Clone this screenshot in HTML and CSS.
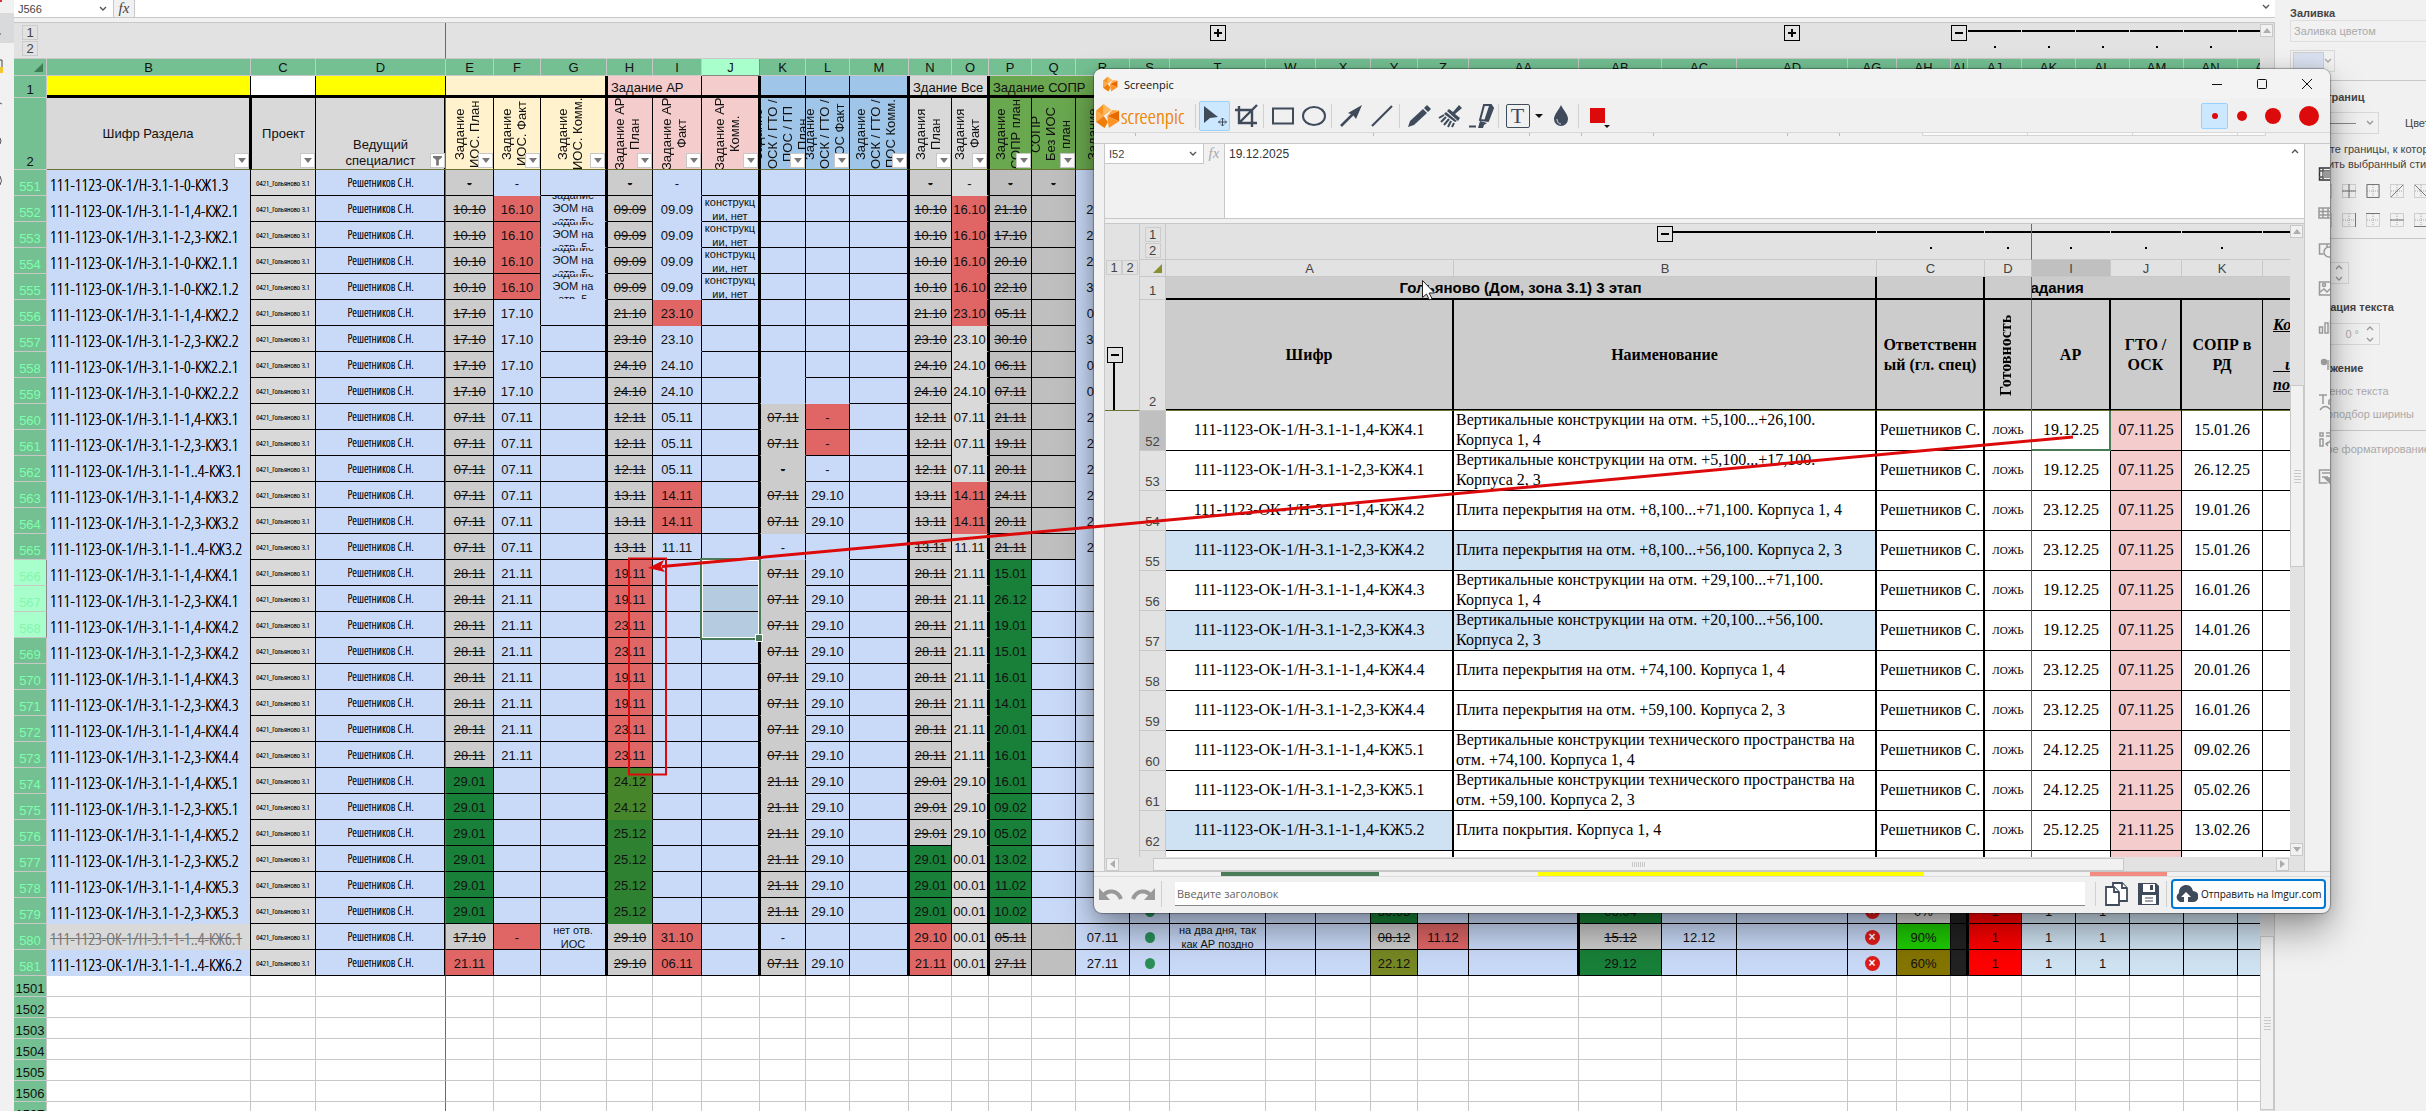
FILE: index.html
```html
<!DOCTYPE html>
<html lang="ru">
<head>
<meta charset="utf-8">
<title>Таблица — Screenpic</title>
<link rel="stylesheet" href="styles.css">
</head>
<body>
<div class="app">
  <aside class="rail">
    <svg width="14" height="240" viewBox="0 0 14 240" aria-hidden="true">
      <path d="M0 0h2v2h-2z" fill="#e03030"/><path d="M0 13h14v30h-14z" fill="#d8dadc"/><path d="M0 34h1" stroke="#555"/>
      <path d="M0 60h2v8" stroke="#444" fill="none"/><rect x="0" y="67" width="3" height="6" fill="#f2c72e"/>
      <path d="M0 103l2 1M0 138q2 3 0 6M0 176q3 5 0 9" stroke="#555" fill="none"/>
    </svg>
  </aside>
  <main class="book">
    <div class="formula">
      <label class="name-box"><input class="name-input" value="J566" aria-label="Имя ячейки"><svg width="8" height="6" viewBox="0 0 8 6"><path d="M1 1l3 3 3-3" fill="none" stroke="#555" stroke-width="1.4"/></svg></label>
      <button class="fx" aria-label="Вставить функцию">fx</button>
      <input class="formula-input" aria-label="Формула">
      <svg class="expand" width="8" height="6" viewBox="0 0 8 6"><path d="M1 1l3 3 3-3" fill="none" stroke="#555" stroke-width="1.4"/></svg>
    </div>
    <div class="sheet-row">
      <div class="sheet"><table class="grid" id="grid"></table></div>
      <div class="vbar"><span class="arrow up"></span><span class="vthumb"></span></div>
    </div>
  </main>
  <aside class="panel">
    <h3>Заливка</h3>
    <select class="fill-select" aria-label="Заливка" disabled><option>Заливка цветом</option></select>
    <button class="swatch" aria-label="Цвет заливки"><i></i><svg width="8" height="6" viewBox="0 0 8 6"><path d="M1 1l3 3 3-3" fill="none" stroke="#aaa" stroke-width="1.4"/></svg></button>
    <hr>
    <h3>Стиль границ</h3>
    <div class="style-row"><button class="line-style" aria-label="Линия"><i></i><svg width="8" height="6" viewBox="0 0 8 6"><path d="M1 1l3 3 3-3" fill="none" stroke="#999" stroke-width="1.4"/></svg></button><span>Цвет</span></div>
    <p class="hint">Выберите границы, к которым<br>применить выбранный стиль</p>
    <div class="borders" id="borders"></div>
    <hr>
    <div class="spin indent"><svg width="8" height="16" viewBox="0 0 8 16"><path d="M1 4l3-3 3 3M1 12l3 3 3-3" fill="none" stroke="#999" stroke-width="1.3"/></svg></div>
    <h3>Ориентация текста</h3>
    <div class="spin angle"><span>0 °</span><svg width="8" height="16" viewBox="0 0 8 16"><path d="M1 4l3-3 3 3M1 12l3 3 3-3" fill="none" stroke="#999" stroke-width="1.3"/></svg></div>
    <h3>Отображение</h3>
    <label class="check"><input type="checkbox" disabled>Перенос текста</label>
    <label class="check"><input type="checkbox" disabled>Автоподбор ширины</label>
    <hr>
    <p class="muted">Условное форматирование</p>
  </aside>
</div>

<section class="window">
  <header class="title">
    <svg width="15" height="16" viewBox="0 0 28 28"><use href="#logo"/></svg>
    <span>Screenpic</span>
    <div class="win-buttons">
      <button aria-label="Свернуть"><svg width="12" height="12"><path d="M1 6.5h10" stroke="#111"/></svg></button>
      <button aria-label="Развернуть"><svg width="12" height="12"><rect x="1.5" y="1.5" width="9" height="9" rx="1" fill="none" stroke="#111"/></svg></button>
      <button aria-label="Закрыть"><svg width="12" height="12"><path d="M1 1l10 10M11 1L1 11" stroke="#111"/></svg></button>
    </div>
  </header>
  <div class="tools">
    <svg class="big-logo" width="24" height="26" viewBox="0 0 28 28">
      <defs><g id="logo"><path d="M9 0L9 14 0 8z" fill="#f7931e"/><path d="M0 8l9 6-9 7z" fill="#f9a94a"/><path d="M9 14l5 7-4 7-10-7z" fill="#ef7f0a"/><path d="M9 0l9 7-9 7z" fill="#ffb860"/><path d="M13 14l14-6v12z" fill="#e56a00"/><path d="M13 14l14 6-12 8z" fill="#ff9426"/><path d="M13 14l6-7 8 1z" fill="#ffa43b"/></g></defs>
      <use href="#logo"/>
    </svg>
    <span class="brand">screenpic</span>
    <i class="sep"></i>
    <button class="tool on" aria-label="Выделение"><svg width="26" height="26" viewBox="0 0 26 26"><path d="M2 3l14 11-8 1-6 5z" fill="#3f4b5b"/><path d="M20.500 15v8M16.500 19h8M19 16.500l1.500-1.500 1.500 1.500M19 21.500l1.500 1.500 1.500-1.500M18 17.500l-1.500 1.500 1.500 1.500M23 17.500l1.500 1.500-1.500 1.500" stroke="#3f4b5b" fill="none"/></svg></button>
    <button class="tool" aria-label="Обрезка"><svg width="26" height="26" viewBox="0 0 26 26"><path d="M6 3v17h18M2 7h17v17M6 20L24 2" stroke="#3f4b5b" stroke-width="2.400" fill="none"/></svg></button>
    <i class="sep"></i>
    <button class="tool" aria-label="Прямоугольник"><svg width="26" height="26" viewBox="0 0 26 26"><rect x="3" y="5.500" width="20" height="15" fill="none" stroke="#3f4b5b" stroke-width="2"/></svg></button>
    <button class="tool" aria-label="Эллипс"><svg width="26" height="26" viewBox="0 0 26 26"><ellipse cx="13" cy="13" rx="11" ry="9" fill="none" stroke="#3f4b5b" stroke-width="2"/></svg></button>
    <i class="sep"></i>
    <button class="tool" aria-label="Стрелка"><svg width="26" height="26" viewBox="0 0 26 26"><path d="M3 23L17 9" stroke="#3f4b5b" stroke-width="2.500"/><path d="M24 2l-6 14-3-4-5-2z" fill="#3f4b5b"/></svg></button>
    <button class="tool" aria-label="Линия"><svg width="26" height="26" viewBox="0 0 26 26"><path d="M3 23L23 3" stroke="#3f4b5b" stroke-width="2.200"/></svg></button>
    <i class="sep"></i>
    <button class="tool" aria-label="Карандаш"><svg width="26" height="26" viewBox="0 0 26 26"><path d="M2 24l2-6 13-12 4 4-13 12z" fill="#3f4b5b"/><path d="M18 5l3-3 4 4-3 3z" fill="#3f4b5b"/></svg></button>
    <button class="tool" aria-label="Кисть"><svg width="26" height="26" viewBox="0 0 26 26"><path d="M10 8l2-2 4 3 6-7 3 3-7 6 5 4-2 3z" fill="#3f4b5b"/><path d="M9 9l11 9-2 1-11-8z" fill="#3f4b5b"/><path d="M7 12l-5 3M9 14l-5 5M12 16l-5 6M14 18l-3 6M17 20l-2 4" stroke="#3f4b5b" stroke-width="2"/></svg></button>
    <button class="tool" aria-label="Маркер"><svg width="26" height="26" viewBox="0 0 26 26"><path d="M16 2h7l2 3-5 13-8-1z" fill="none" stroke="#3f4b5b" stroke-width="2"/><path d="M21 3h4l-5 15-4 0z" fill="#3f4b5b"/><path d="M12 18l7 2-3 2-1 3h-5z" fill="#3f4b5b"/><path d="M1 23.500h7" stroke="#3f4b5b" stroke-width="2"/></svg></button>
    <i class="sep"></i>
    <button class="tool text-tool" aria-label="Текст"><b>T</b></button>
    <button class="drop" aria-label="Параметры текста"></button>
    <button class="tool" aria-label="Размытие"><svg width="26" height="26" viewBox="0 0 26 26"><path d="M13 2c2 5 7 9 7 14a7 7 0 0 1-14 0c0-5 5-9 7-14z" fill="#3f4b5b"/><path d="M9 16c0 3 2 5 4 5" stroke="#9fb0c0" fill="none" stroke-width="1.500"/></svg></button>
    <i class="sep"></i>
    <button class="tool" aria-label="Цвет"><svg width="31" height="26" viewBox="0 0 31 26"><rect x="7" y="5" width="15" height="15" fill="#dc0a0a"/><path d="M21 22h6l-3 3z" fill="#111"/></svg></button>
    <div class="sizes">
      <button class="size on" aria-label="Тонкая"><svg width="6" height="6"><circle cx="3" cy="3" r="3" fill="#dc0a0a"/></svg></button>
      <button class="size" aria-label="Средняя"><svg width="10" height="10"><circle cx="5" cy="5" r="5" fill="#dc0a0a"/></svg></button>
      <button class="size wide" aria-label="Толстая"><svg width="16" height="16"><circle cx="8" cy="8" r="8" fill="#dc0a0a"/></svg></button>
      <button class="size wide" aria-label="Очень толстая"><svg width="20" height="20"><circle cx="10" cy="10" r="10" fill="#dc0a0a"/></svg></button>
    </div>
  </div>
  <div class="shot">
    <div class="ribbon"><svg width="1236" height="10" viewBox="0 0 1236 10"><path d="M41.500 0v3M279.500 0v3M435.500 0v3M487.500 0v3M559.500 0v3M693.500 0v3M745.500 0v3" stroke="#bbb"/><path d="M828.500 0v2.500h343v-2.500M933.500 0v2M1038.500 0v2M1143.500 0v2" stroke="#d5d5d5" fill="#fafafa"/></svg></div>
    <div class="shot-body">
      <div class="shot-main">
        <div class="formula tall">
          <div class="name-side"><label class="name-box"><input class="name-input" value="I52" aria-label="Имя ячейки"><svg width="8" height="6" viewBox="0 0 8 6"><path d="M1 1l3 3 3-3" fill="none" stroke="#555" stroke-width="1.4"/></svg></label><button class="fx dim" aria-label="Вставить функцию">fx</button></div>
          <textarea class="formula-input" aria-label="Формула">19.12.2025</textarea>
          <svg class="expand" width="8" height="6" viewBox="0 0 8 6"><path d="M1 5l3-3 3 3" fill="none" stroke="#555" stroke-width="1.4"/></svg>
        </div>
        <div class="sheet-row">
          <div class="sheet"><table class="inner" id="inner"></table></div>
          <div class="vbar"><span class="arrow up"></span><span class="vthumb"></span><span class="arrow down"></span></div>
        </div>
        <div class="hbar"><span class="arrow left"></span><span class="hthumb"></span><span class="arrow right"></span></div>
      </div>
      <div class="side-icons">
        <svg width="26" height="728" viewBox="2304 144 26 728" fill="none" stroke="#999" stroke-width="1.500">
          <path d="M2332 168h-13.500v12h13.500" stroke="#333"/><path d="M2318 171h12M2322 168v12M2318 177h12" stroke="#555"/><rect x="2323" y="172" width="8" height="5" fill="#999"/>
          <path d="M2331 208h-13v10h13M2318 211.500h13M2318 215h13M2322 208v10M2327 208v10"/>
          <path d="M2331 244h-12.500v10h4M2326 244v3"/><circle cx="2328" cy="252" r="5"/>
          <path d="M2331 282h-12.500v13h12M2319 292l4-3 3 3 4-4"/><circle cx="2323" cy="285" r="1.500"/>
          <path d="M2318.500 327h3v6h-3zM2324 323h3v10h-3zM2329.500 320v13"/>
          <path d="M2327 360v10M2329.500 360v10" /><circle cx="2323" cy="362" r="2.500" fill="#999"/>
          <path d="M2318 395h8M2322 395v9M2331 399q-4 0-3 5h2M2319 410q5-7 11 0"/>
          <path d="M2319 433h3v3h-3zM2325 433h5v3h-5M2319 439h3v7h-3zM2330 440q-3 4-5 4M2327 442l-2 2 2 2"/>
          <path d="M2330 470h-11.500v13h8M2321 473h8M2321 477h6"/><path d="M2324 478h7v8l-3-4z" fill="#999"/>
        </svg>
      </div>
    </div>
    <div class="tabs"><i class="tab-green"></i><i class="tab-yellow"></i><i class="tab-pink"></i></div>
  </div>
  <footer class="actions">
    <button class="act" aria-label="Отменить"><svg width="24" height="14" viewBox="0 0 24 14"><path d="M4 9C8 3 18 2 22 12" stroke="#999" stroke-width="4" fill="none"/><path d="M0 1v12h11z" fill="#999"/></svg></button>
    <button class="act" aria-label="Вернуть"><svg width="24" height="14" viewBox="0 0 24 14"><path d="M20 9C16 3 6 2 2 12" stroke="#999" stroke-width="4" fill="none"/><path d="M24 1v12H13z" fill="#999"/></svg></button>
    <i class="sep"></i>
    <input class="caption" placeholder="Введите заголовок" aria-label="Введите заголовок">
    <i class="sep"></i>
    <button class="act" aria-label="Копировать"><svg width="24" height="26" viewBox="0 0 24 26" fill="#fff" stroke="#3f4b5b" stroke-width="1.800"><path d="M9 2h9l5 5v13h-14z"/><path d="M18 2v5h5"/><path d="M2 6h8l5 5v13H2z"/><path d="M10 6v5h5"/></svg></button>
    <button class="act" aria-label="Сохранить"><svg width="24" height="24" viewBox="0 0 24 24"><path d="M2 1h18l3 3v19H2z" fill="#3f4b5b"/><rect x="7" y="2" width="12" height="8" fill="#fff"/><rect x="14" y="3" width="3" height="5" fill="#3f4b5b"/><rect x="6" y="13" width="14" height="9" fill="#fff"/><path d="M9 16h8M9 19h8" stroke="#3f4b5b"/></svg></button>
    <i class="sep"></i>
    <button class="send"><svg width="24" height="20" viewBox="0 0 24 20"><path d="M6 18a5 5 0 0 1-1-9 7 7 0 0 1 14-2 5.500 5.500 0 0 1 0 11z" fill="#3f4b5b"/><path d="M12 8l5 5h-3v7h-4v-7H7z" fill="#fff"/></svg>Отправить на Imgur.com</button>
  </footer>
</section>

<svg class="marks" width="2426" height="1111" viewBox="0 0 2426 1111" aria-hidden="true">
  <path d="M2073 437L662 566.500" stroke="#dc0a0a" stroke-width="3" fill="none"/>
  <path d="M648 568l16-8-3 6.500 4 5.500z" fill="#dc0a0a"/>
  <rect x="629" y="558.500" width="37" height="216" fill="none" stroke="#dc0a0a" stroke-width="2"/>
  <path d="M1422.500 280.500v17l4-3.500 3 6 2.500-1.500-3-5.500h5.500z" fill="#fff" stroke="#222"/>
</svg>
<script src="script.js"></script>
</body>
</html>
```
FILE: styles.css
```css
* { box-sizing: border-box; }
body { margin: 0; height: 100vh; overflow: hidden; position: relative; font: 11px "Liberation Sans", Arial, sans-serif; color: #222; background: #f1f1f1; }
button, input, select, textarea { font: inherit; color: inherit; margin: 0; padding: 0; border: 0; background: none; border-radius: 0; outline: 0; }
h3, p { margin: 0; }
.app { display: flex; height: 100vh; isolation: isolate; }
.rail { flex: none; width: 14px; overflow: hidden; }
.rail svg { display: block; }
.book { flex: 1; min-width: 0; display: flex; flex-direction: column; }

/* formula bar */
.formula { flex: none; display: flex; height: 18px; background: #fff; border-bottom: 1px solid #c8c8c8; position: relative; }
.name-box { display: flex; align-items: center; justify-content: space-between; width: 100px; padding: 0 6px 0 4px; border-right: 1px solid #c8c8c8; background: #fff; }
.name-input { width: 70px; color: #444; }
.fx { width: 21px; border-right: 1px solid #c8c8c8; background: #f1f1f1; font: italic 15px/15px "Liberation Serif", serif; color: #444; }
.formula-input { flex: 1; min-width: 0; }
.expand { position: absolute; right: 5px; top: 4px; }
.sheet-row { flex: 1; min-height: 0; display: flex; margin-top: 4px; border-top: 1px solid #c8c8c8; background: #e2e2e2; }
.sheet { flex: 1; min-width: 0; overflow: hidden; background: #fff; }
.vbar { flex: none; width: 15px; background: #e2e2e2; border-right: 1px solid #c8c8c8; display: flex; flex-direction: column; padding: 1px 0; }
.arrow { width: 13px; height: 13px; border: 1px solid #c8c8c8; background: #f1f1f1; display: grid; place-items: center; }
.arrow::after { content: ""; border: 4px solid transparent; }
.up::after { border-top: 0; border-bottom: 5px solid #adadad; }
.down::after { border-bottom: 0; border-top: 5px solid #adadad; }
.left::after { border-left: 0; border-right: 5px solid #adadad; }
.right::after { border-right: 0; border-left: 5px solid #adadad; }
.vthumb { height: 174px; margin-top: auto; border: 1px solid #c8c8c8; background: #f1f1f1 repeating-linear-gradient(#c8c8c8 0 1px, transparent 1px 3px) center / 7px 13px no-repeat; }

/* spreadsheets */
table { border-collapse: separate; border-spacing: 0; table-layout: fixed; width: 1px; }
td, th { padding: 0; font-weight: 400; text-align: center; overflow: hidden; white-space: nowrap; position: relative; }
.grid { font-size: 13px; line-height: 15px; color: #111; }
.grid td, .grid th { border-right: 1px solid #000; border-bottom: 1px solid #000; }
.v { display: flex; align-items: center; justify-content: center; height: 25px; overflow: hidden; }
.grid .v { padding-top: 2px; }
.grid .small .v { padding-top: 0; }
.outline th, .outline td { height: 36px; border-color: transparent !important; background: #e2e2e2; }
.grid .outline th { border-bottom-color: #c8c8c8 !important; }
.grid .outline .freeze { border-right-color: #6b7433 !important; }
.level { display: block; width: 16px; height: 15px; margin: 0 auto 1px; border: 1px solid #ccc; font-size: 13px; line-height: 13px; color: #444; text-align: center; }
.box { display: block; width: 16px; height: 16px; border: 1px solid #000; background: #e2e2e2 linear-gradient(#000, #000) center / 8px 2px no-repeat; position: relative; margin: 0 auto; }
.plus { background: linear-gradient(#000, #000) center / 8px 2px no-repeat, linear-gradient(#000, #000) center / 2px 8px no-repeat, #e2e2e2; }
.outline .mark { vertical-align: top; padding-top: 2px; }
.outline .dot { background: linear-gradient(#000, #000) center 23px / 2px 2px no-repeat, linear-gradient(#000, #000) 0 7px / 100% 2px no-repeat, #e2e2e2; }
.outline .half { background: linear-gradient(#000, #000) right 7px / 50% 2px no-repeat, #e2e2e2; }
.grid .cols th { height: 17px; background: #74c093; border-color: #c8c8c8; }
.grid .cols .sel { background: #a9ffcb; border-color: #888; }
.corner::after { content: ""; position: absolute; right: 3px; bottom: 3px; border-left: 9px solid transparent; border-bottom: 9px solid #3b7d55; }
.grid .num { background: #74c093; border-color: #c8c8c8; vertical-align: bottom; }
.grid .data .num { color: #7dffac; line-height: 17px; }
.grid .data .num.sel { background: #a9ffcb; color: #83f7ae; border-right-color: #888; }
.grid .freeze { border-right-color: #6b7433; }
.grid .data .freeze, .head .freeze { box-shadow: inset -1px 0 #000; }
.grid .thick { border-right-width: 2px; }
.grid .thick + td { border-left: 1px solid #000; }
.top td { height: 22px; border-bottom-width: 3px !important; text-align: left; padding-left: 3px; vertical-align: bottom; }
.top .num { height: 22px; }
.head td { height: 72px; border-bottom-color: #6b7433 !important; background: #d9d9d9; }
.head .low { vertical-align: bottom; line-height: 16px; }
.head .rot { writing-mode: vertical-rl; transform: rotate(180deg); display: flex; flex-direction: column; align-items: center; justify-content: center; height: 70px; width: 100%; padding-left: 6px; text-align: center; white-space: pre; }
.filter { position: absolute; right: 0; bottom: 1px; width: 15px; height: 15px; border: 1px solid #c8c8c8; background: #fff; display: grid; place-items: center; }
.filter::after { content: ""; border: 4px solid transparent; border-bottom: 0; border-top: 5px solid #777; }
.funnel::after { width: 9px; height: 10px; border: 0; background: #777; clip-path: polygon(0 0, 100% 0, 100% 20%, 65% 45%, 65% 100%, 35% 100%, 35% 45%, 0 20%); }
.grid .y { background: #ff0; border-right-color: #000; }
.cream, .head .cream { background: #fff2cc; }
.pink, .head .pink { background: #f4cccc; }
.sky, .head .sky { background: #9fc5e8; }
.leaf, .head .leaf { background: #6aa84f; }
.silver { background: #d9d9d9; }
.data td { height: 26px; background: #c9daf8; }
.data .g { background: #ccc; }
.data .l { background: #d9d9d9; }
.data .d { background: #bfbfbf; }
.data .r { background: #e06666; }
.data .n { background: #188038; }
.data .h { background: #46852a; }
.data .k { background: #2e8131; }
.data .o { background: #778824; }
.data .e { background: #1fcc00; }
.data .m { background: #857500; }
.data .R { background: #f00; }
.data .c { background: #d0e3f2; }
.data .K { background: #222; }
.data .s { text-decoration: line-through; }
.grid .data .x { border-bottom-color: transparent; background-clip: border-box; }
.grid .data .code, .data .proj, .data .who { font: 300 17px/22px "Open Sans Condensed Light", "Open Sans Condensed", "Liberation Sans", sans-serif; color: #000; text-shadow: 0 0 0 #000; }
.grid .data .code { border-bottom: 0; text-align: left; padding: 4px 0 0 3px; }
.grid .data .code.s { color: #777; background: #d9d9d9; text-shadow: 0 0 0 #777; }
.data .proj { background: #d9d9d9; }
.grid .data .proj { font-size: 8px; line-height: 12px; }
.grid .data .who { font-size: 12px; line-height: 16px; }
.small { font-size: 11px; line-height: 14px; white-space: pre; }
.three .v { line-height: 13px; }
.grid .data .pick { background: #b5cbdf; }
.data .anchor { overflow: visible; z-index: 1; }
.anchor i { position: absolute; left: -2px; right: -3px; top: -2px; height: 82px; border: 2px solid #4a7c59; box-shadow: inset 0 0 0 1px #fff; }
.anchor i::after { content: ""; position: absolute; right: -4px; bottom: -4px; width: 6px; height: 6px; background: #4a7c59; border: 1px solid #fff; }
.empty td, .empty .num { height: 21px; border-color: #c8c8c8 !important; }
.empty .freeze { border-right-color: #6b7433 !important; box-shadow: none; }
.ball { width: 10px; height: 11px; border-radius: 50%; background: #2a9058; }
.cross { width: 15px; height: 15px; border-radius: 50%; background: #e01b1b; color: #fff; font: bold 12px/15px "Liberation Sans", sans-serif; }

/* format panel */
.panel { flex: none; width: 151px; padding: 6px 0 0 15px; color: #444; overflow: hidden; white-space: nowrap; }
.panel h3 { font-size: 11px; line-height: 14px; }
.panel hr { margin: 0 0 0 -15px; border: 0; border-top: 1px solid #c8c8c8; }
.fill-select { appearance: none; display: block; width: 170px; height: 22px; border: 1px solid #dedede; padding-left: 3px; color: #aaa; opacity: 1; }
.swatch { width: 45px; height: 22px; border: 1px solid #d8d8d8; margin: 8px 0 8px; padding: 1px 2px; display: flex; align-items: center; justify-content: space-between; }
.swatch i { width: 31px; height: 18px; background: #d9e0ef; border: 1px solid #ccc; }
.panel hr + h3 { margin-top: 9px; }
.style-row { display: flex; align-items: center; gap: 26px; margin-top: 8px; }
.line-style { width: 93px; height: 22px; border: 1px solid #d8d8d8; display: flex; align-items: center; justify-content: flex-end; gap: 10px; padding-right: 4px; }
.line-style i { width: 65px; border-top: 1px solid #888; }
.hint { line-height: 15px; margin: 8px 0 12px; }
.borders { display: grid; grid-template-columns: repeat(6, 14px); gap: 15px 10px; margin: 0 0 11px 4px; }
.borders svg { display: block; }
.spin { display: flex; align-items: center; justify-content: flex-end; gap: 7px; height: 22px; border: 1px solid #d8d8d8; padding-right: 5px; color: #aaa; }
.indent { width: 59px; margin: 23px 0 16px; }
.angle { width: 90px; margin: 9px 0 16px; }
.check { display: flex; align-items: center; gap: 7px; margin-top: 9px; line-height: 14px; color: #aaa; }
.check input { width: 12px; height: 12px; }
.check + hr { margin-top: 9px; }
.muted { color: #aaa; margin-top: 12px; }

/* floating editor window */
.window { position: absolute; left: 1094px; top: 69px; right: 96px; bottom: 198px; display: flex; flex-direction: column; overflow: hidden; border-radius: 8px; background: #f0f0f0; box-shadow: 0 0 1px 1px rgba(0,0,0,.3), 0 18px 36px rgba(0,0,0,.36), 0 2px 16px rgba(0,0,0,.12); }
.title { flex: none; height: 30px; display: flex; align-items: center; gap: 6px; padding-left: 9px; background: #f3f3f3; font: 11px "Open Sans", "Noto Sans", sans-serif; color: #111; }
.win-buttons { margin-left: auto; display: flex; gap: 33px; padding-right: 17px; }
.win-buttons svg, .tool svg, .size svg, .act svg { display: block; }
.tools { flex: none; height: 34px; display: flex; align-items: center; padding-left: 2px; border-bottom: 1px solid #d8d8d8; }
.brand { width: 73px; padding-left: 1px; font: 300 21px/26px "Open Sans Condensed Light", "Open Sans Condensed", "Liberation Sans", sans-serif; color: #ef8a10; text-shadow: 0 0 0 #ef8a10; }
.big-logo { flex: none; }
.sep { flex: none; width: 1px; height: 24px; background: #d0d0d0; margin: 0 3px 0 2px; }
.tool { flex: none; width: 31px; height: 30px; display: grid; place-items: center; border: 1px solid transparent; border-radius: 2px; }
.on { background: #cce8ff; border: 1px solid #99d1ff !important; }
.text-tool b { width: 24px; height: 24px; border: 1px solid #3f4b5b; border-radius: 2px; font: 22px/22px "Liberation Serif", serif; color: #3f4b5b; }
.drop { width: 12px; display: grid; place-items: center; }
.drop::after { content: ""; border: 4px solid transparent; border-top-color: #111; border-bottom: 0; }
.sizes { margin-left: auto; display: flex; align-items: center; padding-right: 3px; }
.size { width: 27px; height: 26px; display: grid; place-items: center; border: 1px solid transparent; border-radius: 2px; }
.wide { width: 36px; }
.shot { flex: 1; min-height: 0; display: flex; flex-direction: column; background: #f1f1f1; }
.ribbon { flex: none; height: 11px; border-bottom: 1px solid #c8c8c8; overflow: hidden; }
.ribbon svg { display: block; }
.shot-body { flex: 1; min-height: 0; display: flex; padding-left: 10px; }
.shot-main { flex: 1; min-width: 0; display: flex; flex-direction: column; border-left: 1px solid #c8c8c8; border-right: 1px solid #c8c8c8; }
.side-icons { flex: none; width: 25px; overflow: hidden; }
.tall { height: 75px; }
.tall .name-side { display: flex; width: 120px; border-right: 1px solid #c8c8c8; background: #f1f1f1; align-items: flex-start; }
.tall .name-box { width: 99px; height: 20px; border-bottom: 1px solid #c8c8c8; }
.tall .fx { height: 19px; border: 0; width: 20px; }
.dim { color: #aaa; }
.tall .formula-input { resize: none; padding: 3px 4px; font-size: 12px; line-height: 14px; color: #333; overflow: hidden; }
.shot .vbar { width: 14px; border: 0; }
.shot .vthumb { height: 182px; margin: 147px 0 auto; }
.hbar { flex: none; display: flex; align-items: center; height: 14px; background: #e2e2e2; padding: 0 15px 0 1px; }
.hthumb { flex: 1; margin: 0 152px 0 34px; height: 13px; border: 1px solid #c8c8c8; background: #f1f1f1 repeating-linear-gradient(90deg, #c8c8c8 0 1px, transparent 1px 2px) center / 13px 5px no-repeat; }
.tabs { flex: none; height: 6px; display: flex; border-top: 1px solid #c8c8c8; border-bottom: 1px solid #dcdcdc; }
.tab-green { margin-left: 127px; width: 158px; background: #4a7c59; }
.tab-yellow { margin-left: 159px; width: 386px; background: #ff0; }
.tab-pink { margin-left: 166px; width: 77px; background: #f28b82; }
.actions { flex: none; height: 36px; display: flex; align-items: center; padding: 0 4px 2px 1px; }
.act { flex: none; width: 32px; height: 30px; display: grid; place-items: center; }
.actions .sep { margin: 0 4px 0 2px; }
.actions .act + .sep { height: 26px; }
.caption { flex: 1; min-width: 0; height: 24px; margin: 0 8px 0 9px; padding-left: 2px; background: #fff; border-bottom: 1px solid #888; font: 11px "Open Sans", sans-serif; }
.caption::placeholder { color: #666; opacity: 1; }
.send { flex: none; height: 30px; width: 155px; display: flex; align-items: center; gap: 3px; padding: 0 1px; border: 2px solid #0078d4; border-radius: 4px; background: #fdfdfd; font: 10px "Open Sans", sans-serif; white-space: nowrap; color: #111; }

/* captured sheet */
.inner { font: 16px/20px "Liberation Serif", "Times New Roman", serif; color: #000; }
.inner td, .inner th { border-right: 1px solid #000; border-bottom: 1px solid #000; }
.inner .v { height: 39px; padding-bottom: 2px; }
.inner .gut { background: #e2e2e2; border-color: #c8c8c8; border-bottom: 0; vertical-align: top; }
.inner .outline th { height: 36px; border-bottom-color: #c8c8c8 !important; }
.inner .outline .freeze { border-right-color: #6b7433 !important; }
.inner .outline .num, .inner .outline .gut { border-right-color: #c8c8c8 !important; }
.inner .cols th { height: 17px; background: #e2e2e2; border-color: #c8c8c8; font: 13px/15px "Liberation Sans", sans-serif; color: #444; }
.inner .cols .sel { background: #c0c0c0; }
.inner .cols .level { display: inline-block; margin: 0; vertical-align: top; }
.inner .corner::after { border-bottom-color: #87902c; }
.inner .num { background: #e2e2e2; border-color: #c8c8c8; vertical-align: bottom; font: 13px/17px "Liberation Sans", sans-serif; color: #444; }
.inner .num.sel { background: #c0c0c0; }
.inner .top td { height: 23px; background: #ccc; border-bottom: 2px solid #000 !important; font: bold 15px/20px "Liberation Sans", sans-serif; text-align: center; padding: 0; vertical-align: middle; }
.inner .top .num { background: #e2e2e2; border-bottom: 1px solid #c8c8c8 !important; font-weight: 400; font-size: 13px; }
.inner .top .late { text-align: left; text-indent: -11px; border-right: 0; }
.inner .head td { height: 111px; background: #ccc; font-weight: 700; white-space: pre-line; box-shadow: inset 0 -1px #000; }
.inner .head .num, .inner .head .gut { background: #e2e2e2; font-weight: 400; box-shadow: none; }
.inner .head .rot { height: 109px; padding: 0 0 0 4px; }
.inner .head .cut { font-style: italic; text-decoration: underline; white-space: pre; text-align: left; padding-left: 10px; }
.inner .two { border-right-width: 2px; }
.inner .freeze { border-right-color: #6b7433; }
.inner .data td { background: #fff; height: 40px; }
.inner .data .num { background: #e2e2e2; }
.inner .data .num.sel { background: #c0c0c0; }
.inner .data .hl { background: #cfe2f3; }
.inner .data .pk { background: #f4cccc; }
.inner .desc .v { justify-content: flex-start; padding-left: 2px; white-space: pre; text-align: left; }
.inner .bool { font-size: 11px; }
.inner .active { box-shadow: inset -1px 0 #4a7c59, inset 0 -1px #4a7c59; border-color: #4a7c59; }
.stem { display: block; width: 2px; height: 47px; margin-left: 8px; background: #000; }
.inner .head .box { margin: 47px 0 0 2px; }
.inner .head .gut { vertical-align: top; text-align: left; white-space: nowrap; border-bottom: 1px solid #6b7433; }

.marks { position: absolute; left: 0; top: 0; pointer-events: none; }
```
FILE: script.js
```js
// Column letters and widths of the main sheet
const cols = [['B',204],['C',65],['D',130],['E',48],['F',47],['G',66],['H',46],['I',49],['J',58],['K',46],['L',44],['M',59],['N',43],['O',37],['P',43],['Q',44],['R',54],['S',40],['T',96],['W',50],['X',55],['Y',47],['Z',51],['AA',110],['AB',83],['AC',75],['AD',111],['AG',49],['AH',54],['AI',17],['AJ',54],['AK',54],['AL',54],['AM',54],['AN',54],['AO',54]];
const thick = { G: 1, J: 1, M: 1, O: 1, AA: 1, AI: 1 };
const edge = c => c === 'D' ? ' freeze' : thick[c] ? ' thick' : '';

// Rows: number, code tail, then cells E, F, G, H, I, J, K, L, M, N, O, P, Q, R…
// A cell is "flags|text"; flags are class letters (s = struck, x = no lower line).
const note = 'small|конструкц\nии, нет', eom = 'small x three|задание\nЭОМ на\nэтр. 5';
const rows = [
 [551,'0-КЖ1.3','gs|-','x|-','','gs|-','x|-','','','','','gs|-','lx|-','ds|-','ds|-','x|'],
 [552,'1,4-КЖ2.1','gs|10.10','r|16.10',eom,'gs|09.09','x|09.09',note,'','','','gs|10.10','rx|16.10','ds|21.10','d|','x|21.10'],
 [553,'2,3-КЖ2.1','gs|10.10','rx|16.10',eom,'gs|09.09','x|09.09',note,'','','','gs|10.10','rx|16.10','ds|17.10','d|','x|21.10'],
 [554,'0-КЖ2.1.1','gs|10.10','r|16.10',eom,'gs|09.09','x|09.09',note,'','','','gs|10.10','rx|16.10','ds|20.10','d|','x|21.10'],
 [555,'0-КЖ2.1.2','gs|10.10','r|16.10',eom,'gs|09.09','x|09.09',note,'','','','gs|10.10','rx|16.10','ds|22.10','d|','x|30.10'],
 [556,'1,4-КЖ2.2','gs|17.10','x|17.10','','gs|21.10','rx|23.10','','','','','gs|21.10','rx|23.10','ds|05.11','d|','x|05.11'],
 [557,'2,3-КЖ2.2','gs|17.10','x|17.10','','gs|23.10','x|23.10','','','','','gs|23.10','lx|23.10','ds|30.10','d|','x|30.10'],
 [558,'0-КЖ2.2.1','gs|17.10','x|17.10','','gs|24.10','24.10','','x|','','','gs|24.10','lx|24.10','ds|06.11','d|','x|06.11'],
 [559,'0-КЖ2.2.2','gs|17.10','17.10','','gs|24.10','24.10','','x|','x|','','gs|24.10','lx|24.10','ds|07.11','d|','x|07.11'],
 [560,'1,4-КЖ3.1','gs|07.11','07.11','','gs|12.11','05.11','','gsx|07.11','r|-','','gs|12.11','lx|07.11','ds|21.11','d|','x|21.11'],
 [561,'2,3-КЖ3.1','gs|07.11','07.11','','gs|12.11','05.11','','gsx|07.11','r|-','','gs|12.11','lx|07.11','ds|19.11','d|','x|21.11'],
 [562,'1..4-КЖ3.1','gs|07.11','07.11','','gs|12.11','05.11','','gsx|-','-','','gs|12.11','lx|07.11','ds|20.11','d|','x|21.11'],
 [563,'1,4-КЖ3.2','gs|07.11','07.11','','gs|13.11','r|14.11','','gsx|07.11','29.10','','gs|13.11','rx|14.11','ds|24.11','d|','x|24.11'],
 [564,'2,3-КЖ3.2','gs|07.11','07.11','','gs|13.11','r|14.11','','gsx|07.11','29.10','','gs|13.11','rx|14.11','ds|20.11','d|','x|21.11'],
 [565,'1..4-КЖ3.2','gs|07.11','07.11','','gs|13.11','11.11','','x|-','x|','','gs|13.11','lx|11.11','ds|21.11','d|','x|21.11'],
 ...[[566,'1,4-КЖ4.1','19.11','15.01'],[567,'2,3-КЖ4.1','19.11','26.12'],[568,'1,4-КЖ4.2','23.11','19.01'],[569,'2,3-КЖ4.2','23.11','15.01'],[570,'1,4-КЖ4.3','19.11','16.01'],[571,'2,3-КЖ4.3','19.11','14.01'],[572,'1,4-КЖ4.4','23.11','20.01'],[573,'2,3-КЖ4.4','23.11','16.01']]
   .map(([n,c,h,p]) => [n,c,'gs|28.11','21.11','','r|'+h,'',n===566?'anchor|':n===567||n===568?'pick|':'','gsx|07.11','29.10','','gs|28.11','lx|21.11','nx|'+p,'','']),
 [574,'1,4-КЖ5.1','n|29.01','','','hx|24.12','','','gsx|21.11','29.10','','gs|29.01','lx|29.10','n|16.01','',''],
 [575,'2,3-КЖ5.1','n|29.01','','','hx|24.12','','','gsx|21.11','29.10','','gs|29.01','lx|29.10','n|09.02','',''],
 [576,'1,4-КЖ5.2','n|29.01','','','kx|25.12','','','gsx|21.11','29.10','','gs|29.01','lx|29.10','n|05.02','',''],
 [577,'2,3-КЖ5.2','n|29.01','','','kx|25.12','','','gs|21.11','29.10','','n|29.01','l|00.01','n|13.02','',''],
 [578,'1,4-КЖ5.3','n|29.01','','','kx|25.12','','','gs|21.11','29.10','','n|29.01','l|00.01','n|11.02','',''],
 [579,'2,3-КЖ5.3','n|29.01','','','kx|25.12','','','gs|21.11','29.10','','n|29.01','l|00.01','n|10.02','','','ball|','','','','n|30.03','','','n|06.04','','','cross|','l|0%','K|','R|1','c|1','c|1','c|','c|','c|'],
 [580,'1..4-КЖ6.1','gs|17.10','r|-','small|нет отв.\nИОС','gs|29.10','r|31.10','','-','','','r|29.10','l|00.01','ds|05.11','d|','07.11','ball|','small|на два дня, так\nкак АР поздно','','','gs|08.12','r|11.12','','gs|15.12','12.12','','cross|','e|90%','K|','R|1','c|1','c|1','c|','c|','c|'],
 [581,'1..4-КЖ6.2','r|21.11','','','gs|29.10','r|06.11','','gs|07.11','29.10','','r|21.11','l|00.01','ds|27.11','d|','27.11','ball|','','','','o|22.12','','','n|29.12','','','cross|','m|60%','K|','R|1','c|1','c|1','c|','c|','c|'],
];

const known = /^(small|pick|anchor|ball|cross)/;
function cell(spec, letter) {
  const cut = spec.indexOf('|');
  const flags = cut < 0 ? '' : spec.slice(0, cut), text = cut < 0 ? spec : spec.slice(cut + 1);
  const word = known.test(flags);
  const cls = (word ? flags.replace(/ball|cross/, '') : flags.split('').join(' ')) + edge(letter);
  if (flags === 'anchor') return `<td class="${cls}"><i></i></td>`;
  const body = /^(ball|cross)/.test(flags) ? `<b class="${flags}">${flags === 'cross' ? '×' : ''}</b>` : text;
  return `<td class="${cls}">${body ? `<div class="v">${body}</div>` : ''}</td>`;
}

const heads = { E:['cream','Задание\nИОС. План'], F:['cream','Задание\nИОС. Факт'], G:['cream','Задание\nИОС. Комм.'], H:['pink','Задание АР\nПлан'], I:['pink','Задание АР\nФакт'], J:['pink','Задание АР\nКомм.'], K:['sky','Задание\nОСК / ГТО /\nПОС / ГП\nПлан'], L:['sky','Задание\nОСК / ГТО /\nПОС Факт'], M:['sky','Задание\nОСК / ГТО /\nПОС Комм.'], N:['silver','Задания\nПлан'], O:['silver','Задания\nФакт'], P:['leaf','Задание\nСОПР план'], Q:['leaf','СОПР\nБез ИОС\nплан'], R:['leaf','Задание\nСОПР факт'] };

let html = '<colgroup><col style="width:33px">' + cols.map(c => `<col style="width:${c[1]}px">`).join('') + '</colgroup>';
html += '<tr class="outline"><th><span class="level">1</span><span class="level">2</span></th>' + cols.map(([c]) => {
  if (c === 'T' || c === 'AD') return '<th class="mark"><i class="box plus"></i></th>';
  if (c === 'AI') return '<th class="mark"><i class="box"></i></th>';
  return `<th class="${/^A[J-O]$/.test(c) ? 'dot' : ''}${c === 'D' ? ' freeze' : ''}"></th>`;
}).join('') + '</tr>';
html += '<tr class="cols"><th class="corner"></th>' + cols.map(([c]) => `<th class="${c === 'J' ? 'sel' : ''}">${c}</th>`).join('') + '</tr>';
html += '<tr class="top"><th class="num">1</th><td class="y"></td><td></td><td class="y freeze"></td><td class="cream thick" colspan="3"></td><td class="pink" colspan="2">Задание АР</td><td class="pink thick"></td><td class="sky"></td><td class="sky"></td><td class="sky thick"></td><td class="silver thick" colspan="2">Здание Все</td><td class="leaf" colspan="3">Задание СОПР</td><td colspan="19"></td></tr>';
html += '<tr class="head"><th class="num">2</th><td class="thick">Шифр Раздела<button class="filter" aria-label="Фильтр"></button></td><td>Проект<button class="filter" aria-label="Фильтр"></button></td><td class="freeze low">Ведущий<br>специалист<button class="filter funnel" aria-label="Фильтр"></button></td>' +
  cols.slice(3).map(([c]) => heads[c] ? `<td class="${heads[c][0]}${edge(c)}"><div class="rot"><span>${heads[c][1]}</span></div><button class="filter" aria-label="Фильтр"></button></td>` : '<td></td>').join('') + '</tr>';
for (const [n, code, ...cells] of rows) {
  const picked = n > 565 && n < 569;
  html += `<tr class="data"><th class="num${picked ? ' sel' : ''}">${n}</th><td class="code${n === 580 ? ' s' : ''}">111-1123-ОК-1/Н-3.1-1-${code}</td><td class="proj">0421_Гольяново 3.1</td><td class="who freeze">Решетников С.Н.</td>` +
    cols.slice(3).map(([c], i) => cell(cells[i] || '', c)).join('') + '</tr>';
}
for (let n = 1501; n < 1508; n++) html += `<tr class="empty"><th class="num">${n}</th>` + cols.map(([c]) => `<td${c === 'D' ? ' class="freeze"' : ''}></td>`).join('') + '</tr>';
document.getElementById('grid').innerHTML = html;

// Sheet inside the editor window
const lines = [
 [52,'1,4-КЖ4.1','Вертикальные конструкции на отм. +5,100...+26,100.\nКорпуса 1, 4','19.12.25','07.11.25','15.01.26'],
 [53,'2,3-КЖ4.1','Вертикальные конструкции на отм. +5,100...+17,100.\nКорпуса 2, 3','19.12.25','07.11.25','26.12.25'],
 [54,'1,4-КЖ4.2','Плита перекрытия на отм. +8,100...+71,100. Корпуса 1, 4','23.12.25','07.11.25','19.01.26'],
 [55,'2,3-КЖ4.2','Плита перекрытия на отм. +8,100...+56,100. Корпуса 2, 3','23.12.25','07.11.25','15.01.26'],
 [56,'1,4-КЖ4.3','Вертикальные конструкции на отм. +29,100...+71,100.\nКорпуса 1, 4','19.12.25','07.11.25','16.01.26'],
 [57,'2,3-КЖ4.3','Вертикальные конструкции на отм. +20,100...+56,100.\nКорпуса 2, 3','19.12.25','07.11.25','14.01.26'],
 [58,'1,4-КЖ4.4','Плита перекрытия на отм. +74,100. Корпуса 1, 4','23.12.25','07.11.25','20.01.26'],
 [59,'2,3-КЖ4.4','Плита перекрытия на отм. +59,100. Корпуса 2, 3','23.12.25','07.11.25','16.01.26'],
 [60,'1,4-КЖ5.1','Вертикальные конструкции технического пространства на\nотм. +74,100. Корпуса 1, 4','24.12.25','21.11.25','09.02.26'],
 [61,'2,3-КЖ5.1','Вертикальные конструкции технического пространства на\nотм. +59,100. Корпуса 2, 3','24.12.25','21.11.25','05.02.26'],
 [62,'1,4-КЖ5.2','Плита покрытия. Корпуса 1, 4','25.12.25','21.11.25','13.02.26'],
];
const v = t => `<div class="v">${t}</div>`;
let sub = '<colgroup>' + [35,26,288,423,108,47,79,71,81,60].map(w => `<col style="width:${w}px">`).join('') + '</colgroup>';
sub += '<tr class="outline"><th class="gut"></th><th class="num"><span class="level">1</span><span class="level">2</span></th><th></th><th class="mark half"><i class="box"></i></th><th class="dot"></th><th class="dot freeze"></th><th class="dot"></th><th class="dot"></th><th class="dot"></th><th class="dot"></th></tr>';
sub += '<tr class="cols"><th class="gut"><span class="level">1</span><span class="level">2</span></th><th class="corner"></th><th>A</th><th>B</th><th>C</th><th>D</th><th class="sel">I</th><th>J</th><th>K</th><th></th></tr>';
sub += '<tr class="top"><th class="gut"></th><th class="num">1</th><td colspan="2" class="two">Гольяново (Дом, зона 3.1) 3 этап</td><td class="two"></td><td class="freeze"></td><td colspan="4" class="late">Задания</td></tr>';
sub += '<tr class="head"><th class="gut"><i class="box"></i><i class="stem"></i></th><th class="num">2</th><td class="two">Шифр</td><td class="two">Наименование</td><td class="two">Ответственн\nый (гл. спец)</td><td class="freeze"><div class="rot"><span>Готовность</span></div></td><td class="two">АР</td><td class="two">ГТО /\nОСК</td><td>СОПР в\nРД</td><td class="cut">Ко\n\n   и\nпо</td></tr>';
lines.forEach(([n, code, desc, ar, gto, sopr], i) => {
  sub += `<tr class="data">${i ? '' : '<th class="gut" rowspan="12"></th>'}<th class="num${i ? '' : ' sel'}">${n}</th><td class="two${n === 55 || n === 57 || n === 62 ? ' hl' : ''}">${v('111-1123-ОК-1/Н-3.1-1-' + code)}</td><td class="desc two${n === 55 || n === 57 ? ' hl' : ''}">${v(desc)}</td><td class="two">${v('Решетников С.')}</td><td class="bool freeze">${v('ЛОЖЬ')}</td><td class="${i ? '' : 'active'}">${v(ar)}</td><td class="pk">${v(gto)}</td><td>${v(sopr)}</td><td></td></tr>`;
});
sub += '<tr class="data"><th class="num"></th><td class="two"></td><td class="two"></td><td class="two"></td><td class="freeze"></td><td></td><td class="pk"></td><td></td><td></td></tr>';
document.getElementById('inner').innerHTML = sub;

// Border preset icons: dotted frame plus the lines that the preset draws
const presets = ['M1 1h12v12h-12z','','M7 0v14M0 7h14','M1 0.500h12v13h-12z','M1 13L13 1','M1 1l12 12','M0.500 0v14','M7 0v14','M13.500 0v14','M0 .5h14','M0 7h14','M0 13.500h14'];
document.getElementById('borders').innerHTML = presets.map(d => `<svg width="14" height="14" viewBox="0 0 14 14" fill="none"><path d="M.5 .5h13v13h-13zM7 1v12M1 7h12" stroke="#aaa" stroke-dasharray="1 1"/><path d="${d}" stroke="#777"/></svg>`).join('');
```
